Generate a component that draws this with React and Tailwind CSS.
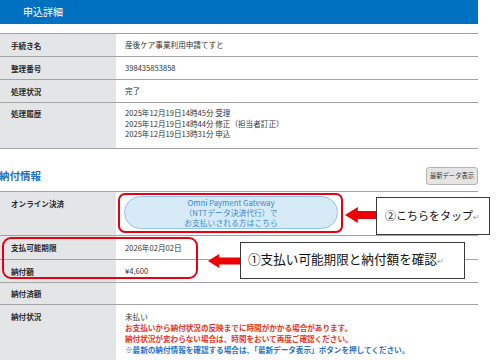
import React from "react";

const F = { fontFamily: '"Noto Sans CJK JP", "Noto Sans", sans-serif' };

function Row({ label, children, h, labelTop = false, pt = "" }) {
  return (
    <div className={`flex border-b border-[#a3a3a3] ${h}`}>
      <div
        className={`w-[116px] shrink-0 bg-[#e4e5e7] pl-[11px] font-bold text-[#2b2b2b] text-[7.6px] flex ${
          labelTop ? `items-start ${pt}` : "items-center"
        }`}
      >
        <span className="leading-[11px]">{label}</span>
      </div>
      <div
        className={`flex-1 pl-[9px] text-[#333] text-[7.6px] flex ${
          labelTop ? `flex-col items-start ${pt}` : "items-center"
        }`}
      >
        {children}
      </div>
    </div>
  );
}

function Arrow({ className, head, body, len }) {
  return (
    <div className={`absolute flex items-center ${className}`}>
      <svg width={len} height={head} viewBox={`0 0 ${len} ${head}`}>
        <polygon
          points={`0,${head / 2} ${head * 0.8},0 ${head * 0.8},${(head - body) / 2} ${len},${(head - body) / 2} ${len},${(head + body) / 2} ${head * 0.8},${(head + body) / 2} ${head * 0.8},${head}`}
          fill="#ee0000"
        />
      </svg>
    </div>
  );
}

export default function App() {
  return (
    <div className="relative w-[500px] h-[360px] overflow-hidden bg-white" style={F}>
      <div className="w-[478px]">
        <div className="h-[24px] bg-[#0070c0] flex items-center pl-[23px]">
          <span className="text-white text-[10px] leading-none">申込詳細</span>
        </div>
        <div className="mt-[9px] border-t border-[#a3a3a3]">
          <Row label="手続き名" h="h-[23px]">産後ケア事業利用申請てすと</Row>
          <Row label="整理番号" h="h-[23px]">398435853858</Row>
          <Row label="処理状況" h="h-[23px]">完了</Row>
          <Row label="処理履歴" h="h-[46px]" labelTop pt="pt-[5px]">
            <div className="leading-[10.5px]">2025年12月19日14時45分 受理</div>
            <div className="leading-[10.5px]">2025年12月19日14時44分 修正（担当者訂正）</div>
            <div className="leading-[10.5px]">2025年12月19日13時31分 申込</div>
          </Row>
        </div>
        <div className="h-[42px] flex items-end justify-between pb-[6px]">
          <span className="text-[10.5px] leading-[18px] font-bold text-[#1f6fba] -ml-[1px]">納付情報</span>
          <div className="w-[52px] h-[18px] bg-[#e4e4e4] border border-[#b5b5b5] rounded-[3px] flex items-center justify-center text-[6.3px] text-[#333] leading-none">
            最新データ表示
          </div>
        </div>
        <div className="border-t border-[#a3a3a3]">
          <Row label="オンライン決済" h="h-[44px]" labelTop pt="pt-[6px]">
            <div className="ml-[-1px] mt-[-2px] w-[214px] h-[33px] rounded-full bg-[#d7eaf8] border border-[#92c4ea] flex flex-col items-center justify-center text-[#3a8bd2] text-[7.8px] leading-[10px]">
              <span>Omni Payment Gateway</span>
              <span>（NTTデータ決済代行）で</span>
              <span>お支払いされる方はこちら</span>
            </div>
          </Row>
          <Row label="支払可能期限" h="h-[24px]">2026年02月02日</Row>
          <Row label="納付額" h="h-[23px]">¥4,600</Row>
          <Row label="納付済額" h="h-[22px]"></Row>
          <Row label="納付状況" h="h-[70px]" labelTop pt="pt-[6px]">
            <div className="leading-[11px]">未払い</div>
            <div className="leading-[11px] font-bold text-[#e8341c]">お支払いから納付状況の反映までに時間がかかる場合があります。</div>
            <div className="leading-[11px] font-bold text-[#e8341c]">納付状況が変わらない場合は、時間をおいて再度ご確認ください。</div>
            <div className="leading-[11px] font-bold text-[#2a73c9]">※最新の納付情報を確認する場合は、「最新データ表示」ボタンを押してください。</div>
          </Row>
        </div>
      </div>

      {/* annotations */}
      <div className="absolute left-[118px] top-[193px] w-[225px] h-[40px] border-2 border-[#e60012] rounded-[7px]"></div>
      <Arrow className="left-[345px] top-[207px]" head={16} body={8} len={31} />
      <div className="absolute left-[376px] top-[197px] w-[114px] h-[38px] bg-white border border-[#3a3a3a] flex items-center pl-[8px] pb-[2px]">
        <span className="text-[11px] text-[#111] leading-none whitespace-nowrap">
          ②こちらをタップ<span className="text-[8px] text-[#999]">↵</span>
        </span>
      </div>

      <div className="absolute left-[2px] top-[237px] w-[196px] h-[42px] border-2 border-[#e60012] rounded-[9px]"></div>
      <Arrow className="left-[208px] top-[254px]" head={14} body={7} len={32} />
      <div className="absolute left-[240px] top-[242px] w-[225px] h-[37px] bg-white border border-[#3a3a3a] flex items-center pl-[7px] pb-[3px]">
        <span className="text-[12.6px] text-[#111] leading-none whitespace-nowrap">
          ①支払い可能期限と納付額を確認<span className="text-[8px] text-[#999]">↵</span>
        </span>
      </div>
    </div>
  );
}
